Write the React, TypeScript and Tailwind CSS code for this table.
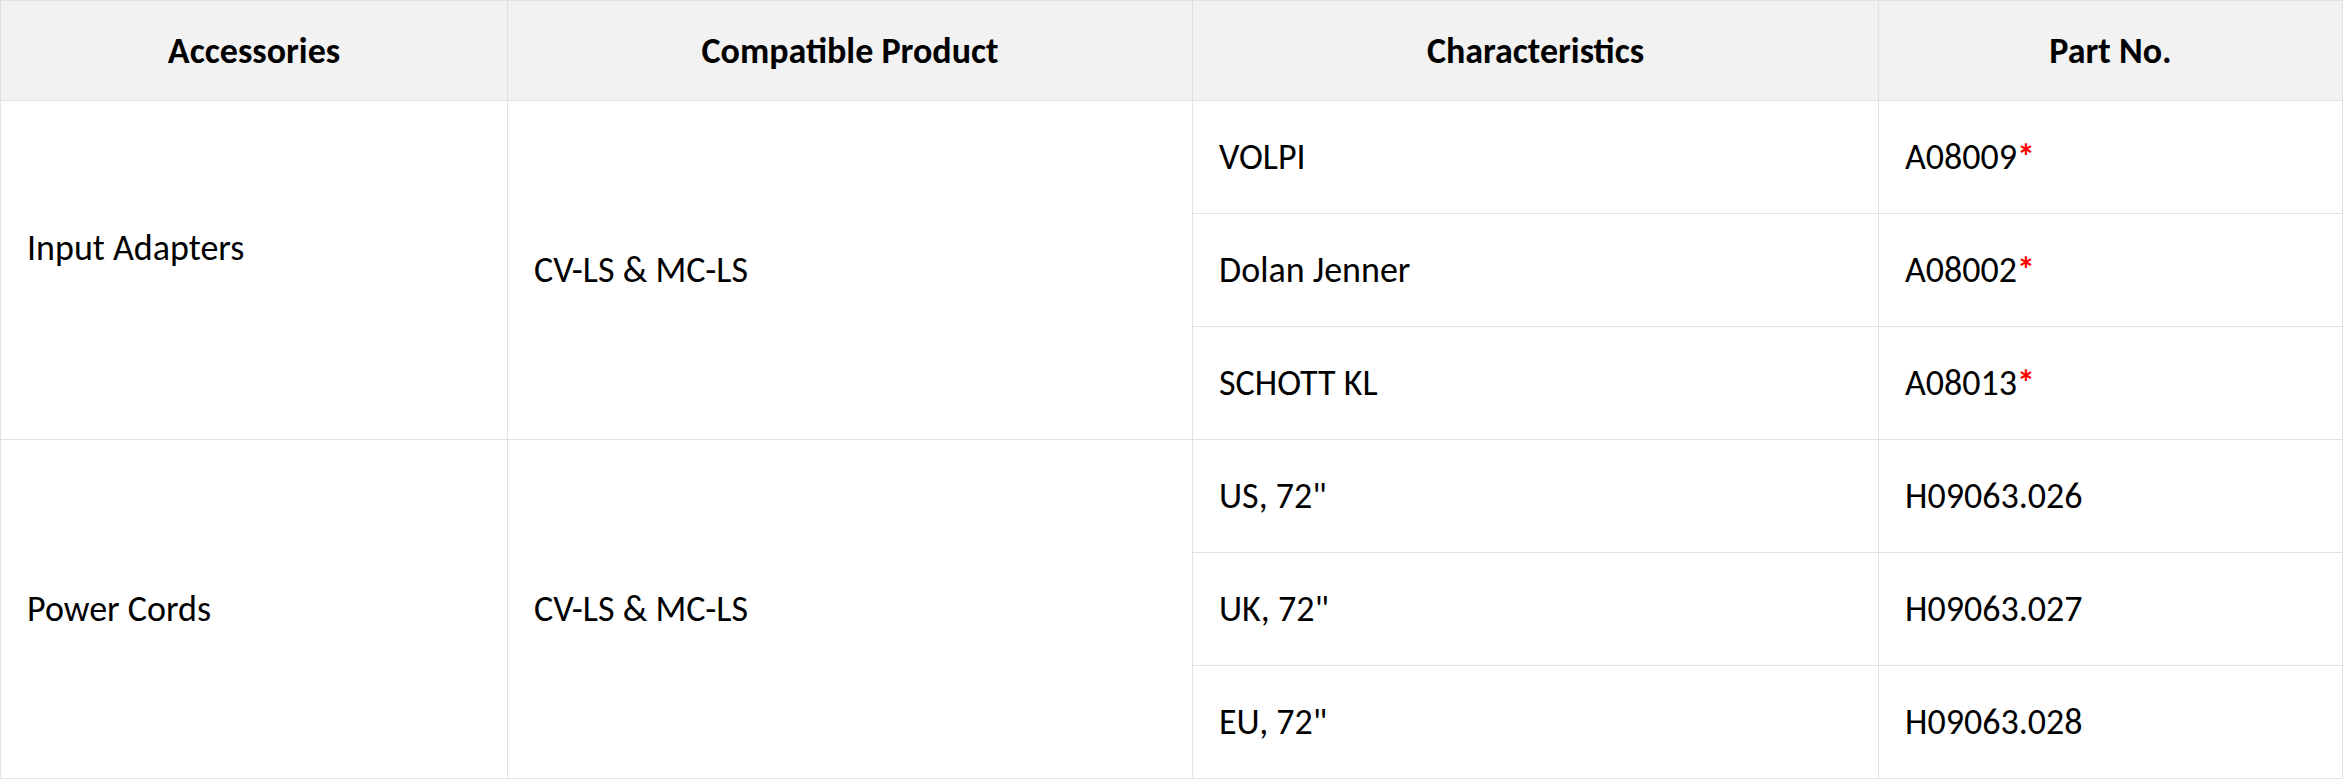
const rows = [
  { group: 'Input Adapters', raise: true, product: 'CV-LS & MC-LS', items: [
    { c: 'VOLPI', p: 'A08009', star: true },
    { c: 'Dolan Jenner', p: 'A08002', star: true },
    { c: 'SCHOTT KL', p: 'A08013', star: true },
  ] },
  { group: 'Power Cords', raise: false, product: 'CV-LS & MC-LS', items: [
    { c: 'US, 72"', p: 'H09063.026', star: false },
    { c: 'UK, 72"', p: 'H09063.027', star: false },
    { c: 'EU, 72"', p: 'H09063.028', star: false },
  ] },
];

const cell = 'border border-[#e1e1e1] px-[26px] align-middle';

export default function App() {
  return (
    <div className="bg-white w-[2345px] h-[784px] text-black text-[36px] font-['Carlito','Lato','Open_Sans',sans-serif]">
      <table className="table-fixed border-collapse w-[2342px]">
        <colgroup>
          <col className="w-[507px]" />
          <col className="w-[685px]" />
          <col className="w-[686px]" />
          <col className="w-[464px]" />
        </colgroup>
        <thead>
          <tr className="h-[100px] bg-[#f2f2f2]">
            <th className={`${cell} text-center font-bold`}>Accessories</th>
            <th className={`${cell} text-center font-bold`}>Compatible Product</th>
            <th className={`${cell} text-center font-bold`}>Characteristics</th>
            <th className={`${cell} text-center font-bold`}>Part No.</th>
          </tr>
        </thead>
        <tbody>
          {rows.map((g) =>
            g.items.map((it, i) => (
              <tr key={g.group + i} className="h-[113px]">
                {i === 0 && (
                  <>
                    <td rowSpan={3} className={`${cell} ${g.raise ? 'pb-[44px]' : ''}`}>{g.group}</td>
                    <td rowSpan={3} className={cell}>{g.product}</td>
                  </>
                )}
                <td className={cell}>{it.c}</td>
                <td className={cell}>
                  {it.p}
                  {it.star && <span className="text-[#ff0000] font-bold">*</span>}
                </td>
              </tr>
            ))
          )}
        </tbody>
      </table>
    </div>
  );
}
